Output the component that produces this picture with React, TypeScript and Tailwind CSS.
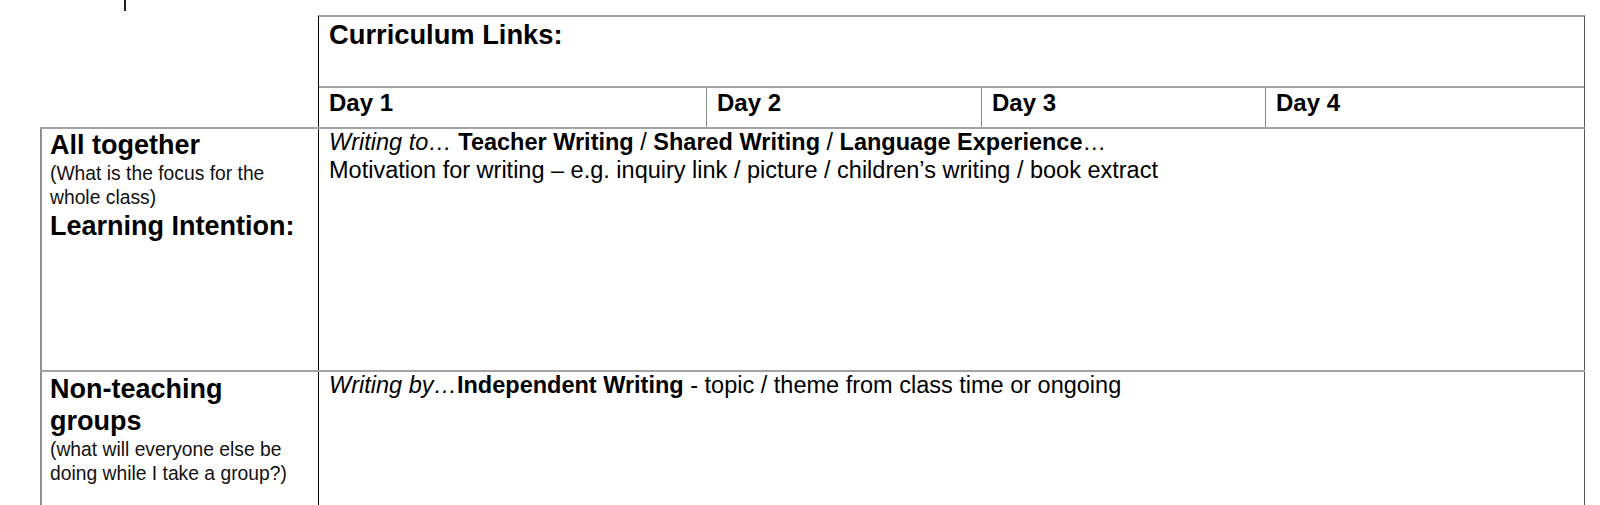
import React from "react";

const days = [
  { label: "Day 1", border: false },
  { label: "Day 2", border: true },
  { label: "Day 3", border: true },
  { label: "Day 4", border: true },
];

const App = () => {
  return (
    <div className="h-[505px] w-[1600px] overflow-hidden bg-white font-['Liberation_Sans',Arial,sans-serif] text-black">
      {/* stray mark above the table */}
      <div className="ml-[124px] h-[11px] w-[2px] bg-[#222]" />

      <div className="mt-[4px] ml-[40px] w-[1545px]">
        {/* header block */}
        <div className="ml-[278px] border-t-2 border-r border-l border-t-[#a3a3a3] border-r-[#555] border-l-black">
          <div className="h-[69px] pt-[2px] pl-[10px] text-[27.3px] leading-[31px] font-bold">
            Curriculum Links:
          </div>
          <div className="grid h-[41px] grid-cols-[387px_275px_284px_1fr] border-t-2 border-[#a3a3a3]">
            {days.map((d) => (
              <div
                key={d.label}
                className={`pt-[1px] pl-[10px] text-[24px] leading-[28px] font-bold ${
                  d.border ? "border-l border-[#8a8a8a]" : ""
                }`}
              >
                {d.label}
              </div>
            ))}
          </div>
        </div>

        {/* all together row */}
        <div className="grid h-[243px] grid-cols-[278px_1fr] border-t-2 border-[#a3a3a3]">
          <div className="border-l-2 border-[#8f8f8f] pl-[8px]">
            <div className="text-[27px] leading-[32px] font-bold">All together</div>
            <div className="pt-[1px] text-[19.3px] leading-[24px] text-[#111]">
              (What is the focus for the
              <br />
              whole class)
            </div>
            <div className="text-[27px] leading-[32px] font-bold">Learning Intention:</div>
          </div>
          <div className="border-r border-l border-r-[#555] border-l-black pl-[10px] text-[23.5px] leading-[27.5px]">
            <div>
              <i>Writing to…</i> <b>Teacher Writing</b> / <b>Shared Writing</b> / <b>Language Experience</b>…
            </div>
            <div>Motivation for writing – e.g. inquiry link / picture / children’s writing / book extract</div>
          </div>
        </div>

        {/* non-teaching groups row */}
        <div className="grid h-[140px] grid-cols-[278px_1fr] border-t-2 border-[#a3a3a3]">
          <div className="border-l-2 border-[#8f8f8f] pt-[1px] pl-[8px]">
            <div className="text-[27px] leading-[32px] font-bold">
              Non-teaching
              <br />
              groups
            </div>
            <div className="pt-[1px] text-[19.3px] leading-[23.5px] text-[#111]">
              (what will everyone else be
              <br />
              doing while I take a group?)
            </div>
          </div>
          <div className="border-r border-l border-r-[#555] border-l-black pl-[10px] text-[23.5px] leading-[27.5px]">
            <i>Writing by…</i>
            <b>Independent Writing</b> - topic / theme from class time or ongoing
          </div>
        </div>
      </div>
    </div>
  );
};

export default App;
